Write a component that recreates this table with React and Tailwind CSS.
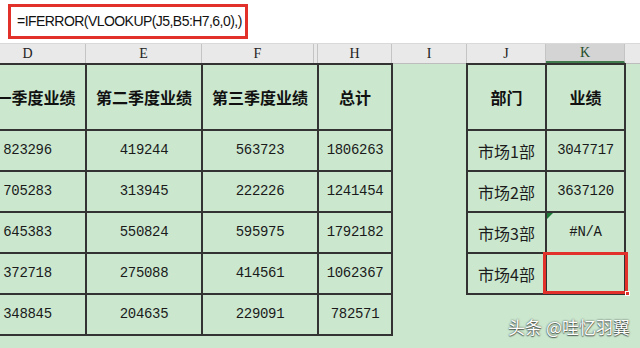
import React from 'react';

// Sheet data
const leftHead = ['第一季度业绩', '第二季度业绩', '第三季度业绩', '总计'];
const leftRows = [
  ['823296', '419244', '563723', '1806263'],
  ['705283', '313945', '222226', '1241454'],
  ['645383', '550824', '595975', '1792182'],
  ['372718', '275088', '414561', '1062367'],
  ['348845', '204635', '229091', '782571'],
];
const rightRows = [
  ['市场1部', '3047717'],
  ['市场2部', '3637120'],
  ['市场3部', '#N/A'],
  ['市场4部', ''],
];

const cjk = "font-['Noto_Sans_CJK_SC',sans-serif]";
const mono = "font-['Liberation_Mono',monospace]";

const ColHead = ({ w, label, active }) => (
  <div
    className={`${w} shrink-0 h-full flex items-center justify-center border-r border-[#c4c4c4] font-['Liberation_Serif',serif] text-[14px] ${
      active ? 'bg-[#d4d4d4] text-[#1f4d2b] border-b-2 border-b-[#3f7a4c]' : 'text-[#222]'
    }`}
  >
    {label}
  </div>
);

export default function App() {
  return (
    <div className="relative w-[640px] h-[348px] overflow-hidden bg-[#cbe8cf]">
      {/* formula bar */}
      <div className="h-[44px] bg-white border-b border-[#d9d9d9] pl-[8px] pt-[4px]">
        <div className="w-[240px] h-[35px] border-[3px] border-[#e2302a] flex items-center pl-[6px] font-['Liberation_Sans',sans-serif] text-[14px] tracking-[-0.55px] text-[#111]">
          =IFERROR(VLOOKUP(J5,B5:H7,6,0),)
        </div>
      </div>

      {/* column letters */}
      <div className="flex h-[20px] ml-[-30px] bg-[#e9e9e9] border-b border-[#bdbdbd]">
        <ColHead w="w-[116px]" label="D" />
        <ColHead w="w-[116px]" label="E" />
        <ColHead w="w-[112px]" label="F" />
        <ColHead w="w-[4px]" label="" />
        <ColHead w="w-[74px]" label="H" />
        <ColHead w="w-[75px]" label="I" />
        <ColHead w="w-[79px]" label="J" />
        <ColHead w="w-[79px]" label="K" active />
        <div className="flex-1" />
      </div>

      {/* sheet body */}
      <div className="flex items-start ml-[-32px] mt-[-1px]">
        <div className="grid grid-cols-[115px_114px_114px_72px] grid-rows-[64px_repeat(5,39px)] gap-[2px] bg-[#333] border-2 border-[#333]">
          {leftHead.map((h) => (
            <div key={h} className={`bg-[#cbe8cf] flex items-center justify-center ${cjk} font-bold text-[16px] text-[#111]`}>
              {h}
            </div>
          ))}
          {leftRows.flat().map((v, i) => (
            <div key={i} className={`bg-[#cbe8cf] flex items-center justify-center ${mono} text-[14px] tracking-[-0.3px] text-[#1a1a1a]`}>
              {v}
            </div>
          ))}
        </div>

        <div className="ml-[73px] grid grid-cols-[77px_77px] grid-rows-[64px_repeat(4,39px)] gap-[2px] bg-[#333] border-2 border-[#333]">
          <div className={`bg-[#cbe8cf] flex items-center justify-center ${cjk} font-bold text-[16px] text-[#111]`}>部门</div>
          <div className={`bg-[#cbe8cf] flex items-center justify-center ${cjk} font-bold text-[16px] text-[#111]`}>业绩</div>
          {rightRows.map(([dept, val], i) => (
            <React.Fragment key={dept}>
              <div className={`bg-[#cbe8cf] flex items-center justify-center ${cjk} text-[16px] text-[#1c1c1c]`}>{dept}</div>
              <div className={`relative bg-[#cbe8cf] flex items-center justify-center ${mono} text-[14px] tracking-[-0.3px] text-[#1a1a1a]`}>
                {val}
                {i === 2 && (
                  <span className="absolute left-0 top-0 w-0 h-0 border-t-[6px] border-t-[#1d7a36] border-r-[6px] border-r-transparent" />
                )}
                {i === 3 && (
                  <>
                    <span className="absolute left-[-4px] top-[-2px] right-[-4px] bottom-[-1px] border-[3px] border-[#e2302a]" />
                    <span className="absolute right-[-6px] bottom-[-3px] w-[5px] h-[5px] bg-[#e2302a] border border-white" />
                  </>
                )}
              </div>
            </React.Fragment>
          ))}
        </div>
      </div>

      {/* watermark */}
      <div className={`absolute right-[10px] bottom-[9px] ${cjk} text-[17px] text-white [text-shadow:0_0_2px_rgba(0,0,0,0.75),0_1px_1px_rgba(0,0,0,0.5)]`}>
        头条 @哇忆羽翼
      </div>
    </div>
  );
}
